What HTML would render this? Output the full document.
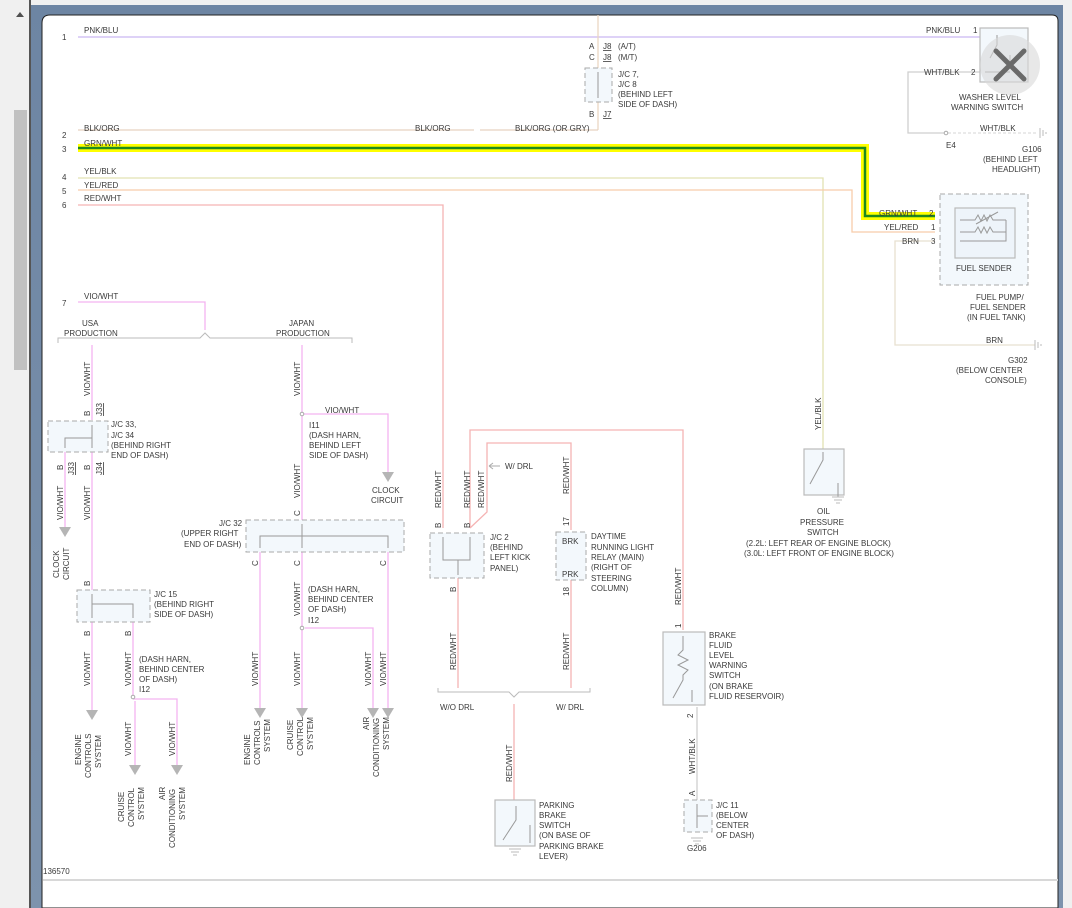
<!DOCTYPE html>
<html><head><meta charset="utf-8"><style>
html,body{margin:0;padding:0;width:1072px;height:908px;overflow:hidden;background:#f0f0f0;font-family:"Liberation Sans",sans-serif}
svg{position:absolute;left:0;top:0}
text{font-family:"Liberation Sans",sans-serif;font-size:8px;fill:#3a3a3a}
</style></head><body>
<svg width="1072" height="908" viewBox="0 0 1072 908">
<defs>
<linearGradient id="bg" x1="0" y1="0" x2="0" y2="1"><stop offset="0" stop-color="#6d85a3"/><stop offset="1" stop-color="#7d93ad"/></linearGradient>
</defs>
<rect x="0" y="0" width="1072" height="5" fill="#f0f0f0"/>
<rect x="0" y="0" width="29" height="908" fill="#f0f0f0"/>
<rect x="14" y="110" width="13" height="260" fill="#c1c1c1"/>
<path d="M16 17 L20 12 L24 17 Z" fill="#505050"/>
<rect x="29" y="0" width="2" height="908" fill="#555"/>
<rect x="31" y="5" width="1033" height="903" fill="url(#bg)"/>
<rect x="1063" y="5" width="9" height="903" fill="#f0f0f0"/>
<path d="M42 908 V23 Q42 15 50 15 H1052 Q1058 15 1058 21 V908 Z" fill="#fff" stroke="#222" stroke-width="1"/>
<rect x="43" y="879" width="1015" height="2" fill="#d8d8d8"/>

<g fill="none" stroke-width="1.3">
<path d="M78 37 H985" stroke="#c9b6f2"/>
<path d="M598 15 V130" stroke="#ead7c4"/>
<path d="M78 130 H474 M480 130 H598" stroke="#e6d2c0"/>
<path d="M78 178 H823 V449" stroke="#e2e2b2"/>
<path d="M78 190 H852 V232 H935" stroke="#f8ccaa"/>
<path d="M78 205 H443 V528" stroke="#f5b3b3"/>
<path d="M985 72 H908 V133 H945" stroke="#cfcfcf"/>
<path d="M948 133 H1036" stroke="#ddd" stroke-dasharray="3 2"/>
<path d="M935 241 H895 V345 H1035" stroke="#e8e0d0"/>
<path d="M78 302 H205 V330" stroke="#f3b3f0"/>
<path d="M92 345 V420 M92 452 V590 M92 622 V710 M65 452 V527" stroke="#f3b3f0"/>
<path d="M133 622 V695 M133 699 H177 V765 M135 701 V765" stroke="#f3b3f0"/>
<path d="M302 345 V520 M304 414 H388 V472 M260 552 V708 M302 552 V626 M302 630 V708 M305 628 H373 V708 M388 552 V708" stroke="#f3b3f0"/>
<path d="M470 528 V430 H683 V630" stroke="#f5b3b3"/>
<path d="M470 528 L487 512 V443 H571 V530" stroke="#f5b3b3"/>
<path d="M458 578 V688 M571 580 V688 M514 704 V800" stroke="#f5b3b3"/>
<path d="M697 707 V800" stroke="#cfcfcf"/>
</g>
<path d="M78 148 H865 V216 H935" fill="none" stroke="#ffff00" stroke-width="8"/>
<path d="M78 148 H865 V216 H935" fill="none" stroke="#1e8a1e" stroke-width="2.5"/>

<path d="M58 343 V338 H200 L205 333 L210 338 H352 V343" fill="none" stroke="#bbb"/>
<path d="M438 688 V692 H509 L514 697 L519 692 H590 V688" fill="none" stroke="#bbb"/>

<g stroke="#aaa" fill="#f3f8fc" stroke-dasharray="5 3">
<rect x="585" y="68" width="27" height="34"/>
<rect x="48" y="421" width="60" height="31"/>
<rect x="77" y="590" width="73" height="32"/>
<rect x="246" y="520" width="158" height="32"/>
<rect x="430" y="533" width="54" height="45"/>
<rect x="556" y="532" width="30" height="48"/>
<rect x="684" y="800" width="28" height="32"/>
<rect x="940" y="194" width="88" height="91"/>
</g>
<g stroke="#bbb" fill="#f3f8fc" stroke-width="1.2">
<rect x="980" y="28" width="48" height="54"/>
<rect x="955" y="208" width="60" height="50" fill="#eef4fa"/>
<rect x="804" y="449" width="40" height="46"/>
<rect x="663" y="632" width="42" height="73"/>
<rect x="495" y="800" width="40" height="46"/>
</g>
<g stroke="#999" fill="none">
<path d="M598 72 V98"/>
<path d="M92 425 V448 M92 438 H65 V448"/>
<path d="M92 594 V618 M92 604 H133 V618"/>
<path d="M302 524 V548 M260 548 V536 H388 V548"/>
<path d="M443 537 V560 H470 V537 M458 560 V575"/>
<path d="M697 804 V828 M697 816 H708"/>
<path d="M960 220 H975 L978 215 L981 221 L984 215 L987 221 L990 215 L993 220 H1006 M960 232 H975 L978 227 L981 233 L984 227 L987 233 L990 227 L993 232 H1006 V220 M960 241 H1006 V232 M976 224 L998 212"/>
<path d="M683 636 V650 L678 655 L688 660 L678 665 L688 670 L683 675 V680 L673 698 M692 690 V702"/>
<path d="M516 806 V820 L503 840 M530 825 V843"/>
<path d="M823 452 V460 L810 484 M838 483 V497"/>
<path d="M997 35 V45 L990 58 M1010 55 V68 M985 72 H1010"/>
</g>
<g stroke="#bbb" fill="none">
<path d="M1040 128 V138 M1043 130 V136 M1046 132 V134"/>
<path d="M1035 340 V350 M1038 342 V348 M1041 344 V346"/>
<path d="M691 838 H703 M693 841 H701 M695 844 H699"/>
<path d="M509 849 H521 M511 852 H519 M513 855 H517"/>
<path d="M832 497 H844 M834 500 H842 M836 503 H840"/>
</g>
<g fill="#fff" stroke="#aaa"><circle cx="946" cy="133" r="1.8"/><circle cx="302" cy="414" r="1.8"/><circle cx="302" cy="628" r="1.8"/><circle cx="133" cy="697" r="1.8"/></g>
<g fill="#b5b5b5">
<path d="M59 527 H71 L65 537 Z"/><path d="M86 710 H98 L92 720 Z"/>
<path d="M129 765 H141 L135 775 Z"/><path d="M171 765 H183 L177 775 Z"/>
<path d="M382 472 H394 L388 482 Z"/>
<path d="M254 708 H266 L260 718 Z"/><path d="M296 708 H308 L302 718 Z"/>
<path d="M367 708 H379 L373 718 Z"/><path d="M382 708 H394 L388 718 Z"/>
</g>
<path d="M490 466 H500" stroke="#aaa"/><path d="M489 466 L493 463 M489 466 L493 469" stroke="#aaa"/>

<g>
<text x="62" y="40">1</text><text x="84" y="33">PNK/BLU</text>
<text x="62" y="138">2</text><text x="84" y="131">BLK/ORG</text>
<text x="62" y="152">3</text><text x="84" y="146">GRN/WHT</text>
<text x="62" y="180">4</text><text x="84" y="174">YEL/BLK</text>
<text x="62" y="194">5</text><text x="84" y="188">YEL/RED</text>
<text x="62" y="208">6</text><text x="84" y="201">RED/WHT</text>
<text x="62" y="306">7</text><text x="84" y="299">VIO/WHT</text>
<text x="415" y="131">BLK/ORG</text><text x="515" y="131">BLK/ORG (OR GRY)</text>
<text x="589" y="49">A</text><text x="603" y="49" text-decoration="underline">J8</text><text x="618" y="49">(A/T)</text>
<text x="589" y="60">C</text><text x="603" y="60" text-decoration="underline">J8</text><text x="618" y="60">(M/T)</text>
<text x="618" y="77">J/C 7,</text><text x="618" y="87">J/C 8</text><text x="618" y="97">(BEHIND LEFT</text><text x="618" y="107">SIDE OF DASH)</text>
<text x="589" y="117">B</text><text x="603" y="117" text-decoration="underline">J7</text>
<text x="926" y="33">PNK/BLU</text><text x="973" y="33">1</text>
<text x="924" y="75">WHT/BLK</text><text x="971" y="75">2</text>
<text x="959" y="100">WASHER LEVEL</text><text x="951" y="110">WARNING SWITCH</text>
<text x="980" y="131">WHT/BLK</text><text x="946" y="148">E4</text>
<text x="1022" y="152">G106</text><text x="983" y="162">(BEHIND LEFT</text><text x="992" y="172">HEADLIGHT)</text>
<text x="879" y="216">GRN/WHT</text><text x="929" y="216">2</text>
<text x="884" y="230">YEL/RED</text><text x="931" y="230">1</text>
<text x="902" y="244">BRN</text><text x="931" y="244">3</text>
<text x="956" y="271">FUEL SENDER</text>
<text x="976" y="300">FUEL PUMP/</text><text x="970" y="310">FUEL SENDER</text><text x="967" y="320">(IN FUEL TANK)</text>
<text x="986" y="343">BRN</text><text x="1008" y="363">G302</text><text x="956" y="373">(BELOW CENTER</text><text x="985" y="383">CONSOLE)</text>
<text x="82" y="326">USA</text><text x="64" y="336">PRODUCTION</text>
<text x="289" y="326">JAPAN</text><text x="276" y="336">PRODUCTION</text>
<text x="111" y="427">J/C 33,</text><text x="111" y="438">J/C 34</text><text x="111" y="448">(BEHIND RIGHT</text><text x="111" y="458">END OF DASH)</text>
<text x="325" y="413">VIO/WHT</text>
<text x="309" y="428">I11</text><text x="309" y="438">(DASH HARN,</text><text x="309" y="448">BEHIND LEFT</text><text x="309" y="458">SIDE OF DASH)</text>
<text x="372" y="493">CLOCK</text><text x="371" y="503">CIRCUIT</text>
<text x="219" y="526">J/C 32</text><text x="181" y="536">(UPPER RIGHT</text><text x="184" y="547">END OF DASH)</text>
<text x="154" y="597">J/C 15</text><text x="154" y="607">(BEHIND RIGHT</text><text x="154" y="617">SIDE OF DASH)</text>
<text x="308" y="592">(DASH HARN,</text><text x="308" y="602">BEHIND CENTER</text><text x="308" y="612">OF DASH)</text><text x="308" y="623">I12</text>
<text x="139" y="662">(DASH HARN,</text><text x="139" y="672">BEHIND CENTER</text><text x="139" y="682">OF DASH)</text><text x="139" y="692">I12</text>
<text x="505" y="469">W/ DRL</text>
<text x="490" y="540">J/C 2</text><text x="490" y="550">(BEHIND</text><text x="490" y="560">LEFT KICK</text><text x="490" y="571">PANEL)</text>
<text x="562" y="544">BRK</text><text x="562" y="577">PRK</text>
<text x="591" y="539">DAYTIME</text><text x="591" y="550">RUNNING LIGHT</text><text x="591" y="560">RELAY (MAIN)</text><text x="591" y="570">(RIGHT OF</text><text x="591" y="581">STEERING</text><text x="591" y="591">COLUMN)</text>
<text x="440" y="710">W/O DRL</text><text x="556" y="710">W/ DRL</text>
<text x="709" y="638">BRAKE</text><text x="709" y="648">FLUID</text><text x="709" y="658">LEVEL</text><text x="709" y="668">WARNING</text><text x="709" y="678">SWITCH</text><text x="709" y="689">(ON BRAKE</text><text x="709" y="699">FLUID RESERVOIR)</text>
<text x="817" y="514">OIL</text><text x="800" y="525">PRESSURE</text><text x="807" y="535">SWITCH</text>
<text x="746" y="546">(2.2L: LEFT REAR OF ENGINE BLOCK)</text><text x="744" y="556">(3.0L: LEFT FRONT OF ENGINE BLOCK)</text>
<text x="539" y="808">PARKING</text><text x="539" y="818">BRAKE</text><text x="539" y="828">SWITCH</text><text x="539" y="838">(ON BASE OF</text><text x="539" y="849">PARKING BRAKE</text><text x="539" y="859">LEVER)</text>
<text x="716" y="808">J/C 11</text><text x="716" y="818">(BELOW</text><text x="716" y="828">CENTER</text><text x="716" y="838">OF DASH)</text>
<text x="687" y="851">G206</text>
<text x="43" y="874">136570</text>
</g>
<g>
<text transform="translate(90,396) rotate(-90)">VIO/WHT</text>
<text transform="translate(90,416) rotate(-90)">B</text>
<text transform="translate(102,416) rotate(-90)" text-decoration="underline">J33</text>
<text transform="translate(63,470) rotate(-90)">B</text><text transform="translate(74,475) rotate(-90)" text-decoration="underline">J33</text>
<text transform="translate(90,470) rotate(-90)">B</text><text transform="translate(102,475) rotate(-90)" text-decoration="underline">J34</text>
<text transform="translate(63,520) rotate(-90)">VIO/WHT</text>
<text transform="translate(90,520) rotate(-90)">VIO/WHT</text>
<text transform="translate(59,578) rotate(-90)">CLOCK</text><text transform="translate(69,580) rotate(-90)">CIRCUIT</text>
<text transform="translate(90,586) rotate(-90)">B</text>
<text transform="translate(90,636) rotate(-90)">B</text><text transform="translate(131,636) rotate(-90)">B</text>
<text transform="translate(90,686) rotate(-90)">VIO/WHT</text>
<text transform="translate(131,686) rotate(-90)">VIO/WHT</text>
<text transform="translate(131,756) rotate(-90)">VIO/WHT</text>
<text transform="translate(175,756) rotate(-90)">VIO/WHT</text>
<text transform="translate(81,765) rotate(-90)">ENGINE</text><text transform="translate(91,778) rotate(-90)">CONTROLS</text><text transform="translate(101,768) rotate(-90)">SYSTEM</text>
<text transform="translate(124,822) rotate(-90)">CRUISE</text><text transform="translate(134,827) rotate(-90)">CONTROL</text><text transform="translate(144,820) rotate(-90)">SYSTEM</text>
<text transform="translate(165,800) rotate(-90)">AIR</text><text transform="translate(175,848) rotate(-90)">CONDITIONING</text><text transform="translate(185,820) rotate(-90)">SYSTEM</text>
<text transform="translate(300,396) rotate(-90)">VIO/WHT</text>
<text transform="translate(300,498) rotate(-90)">VIO/WHT</text>
<text transform="translate(300,516) rotate(-90)">C</text>
<text transform="translate(258,566) rotate(-90)">C</text><text transform="translate(300,566) rotate(-90)">C</text><text transform="translate(386,566) rotate(-90)">C</text>
<text transform="translate(300,616) rotate(-90)">VIO/WHT</text>
<text transform="translate(258,686) rotate(-90)">VIO/WHT</text><text transform="translate(300,686) rotate(-90)">VIO/WHT</text>
<text transform="translate(371,686) rotate(-90)">VIO/WHT</text><text transform="translate(386,686) rotate(-90)">VIO/WHT</text>
<text transform="translate(250,765) rotate(-90)">ENGINE</text><text transform="translate(260,765) rotate(-90)">CONTROLS</text><text transform="translate(270,752) rotate(-90)">SYSTEM</text>
<text transform="translate(293,750) rotate(-90)">CRUISE</text><text transform="translate(303,756) rotate(-90)">CONTROL</text><text transform="translate(313,750) rotate(-90)">SYSTEM</text>
<text transform="translate(369,730) rotate(-90)">AIR</text><text transform="translate(379,777) rotate(-90)">CONDITIONING</text><text transform="translate(389,750) rotate(-90)">SYSTEM</text>
<text transform="translate(441,508) rotate(-90)">RED/WHT</text>
<text transform="translate(470,508) rotate(-90)">RED/WHT</text>
<text transform="translate(484,508) rotate(-90)">RED/WHT</text>
<text transform="translate(441,528) rotate(-90)">B</text><text transform="translate(470,528) rotate(-90)">B</text>
<text transform="translate(456,592) rotate(-90)">B</text>
<text transform="translate(456,670) rotate(-90)">RED/WHT</text>
<text transform="translate(569,494) rotate(-90)">RED/WHT</text>
<text transform="translate(569,526) rotate(-90)">17</text><text transform="translate(569,596) rotate(-90)">18</text>
<text transform="translate(569,670) rotate(-90)">RED/WHT</text>
<text transform="translate(512,782) rotate(-90)">RED/WHT</text>
<text transform="translate(681,605) rotate(-90)">RED/WHT</text>
<text transform="translate(681,628) rotate(-90)">1</text>
<text transform="translate(693,718) rotate(-90)">2</text>
<text transform="translate(695,774) rotate(-90)">WHT/BLK</text>
<text transform="translate(695,796) rotate(-90)">A</text>
<text transform="translate(821,430) rotate(-90)">YEL/BLK</text>
</g>
<circle cx="1010" cy="65" r="30" fill="#d8d8d8" fill-opacity="0.6"/>
<path d="M996 51 L1024 79 M1024 51 L996 79" stroke="#6a6a6a" stroke-width="5" stroke-linecap="round"/>
</svg>
</body></html>
